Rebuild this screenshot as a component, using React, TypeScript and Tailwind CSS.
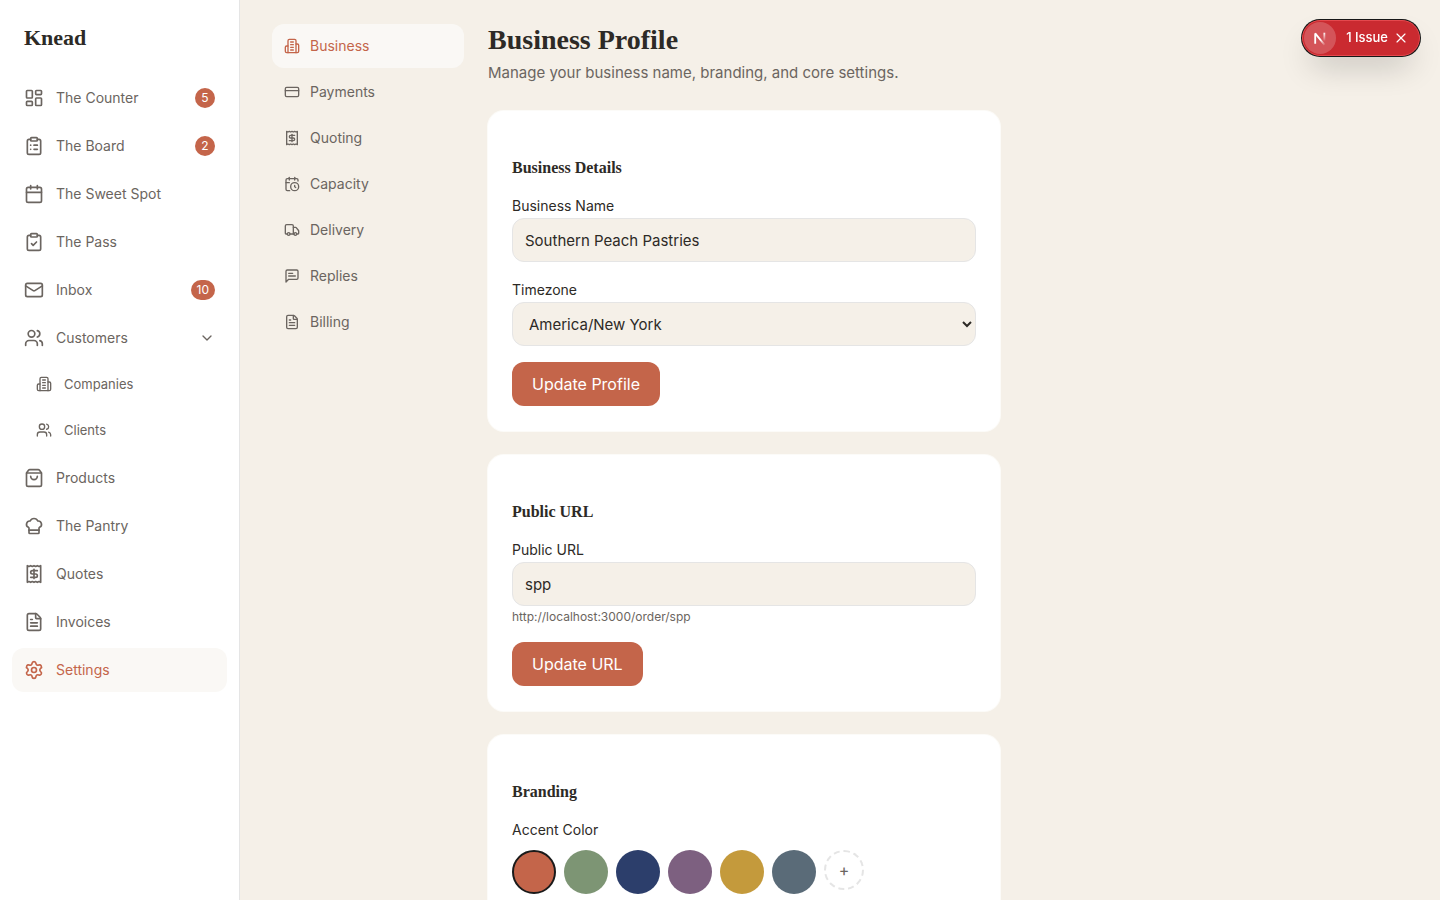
import { useState } from "react";
import type { ComponentType, ReactNode, SVGProps } from "react";
import {
  Calendar,
  CalendarClock,
  ChefHat,
  ChevronDown,
  ClipboardCheck,
  ClipboardList,
  CreditCard,
  FileText,
  LayoutDashboard,
  Mail,
  Receipt,
  Settings,
  ShoppingBag,
  Truck,
  Users,
  X,
} from "lucide-react";

type Icon = ComponentType<SVGProps<SVGSVGElement>>;

type NavItem = {
  label: string;
  icon: Icon;
  badge?: number;
  children?: NavItem[];
};

function StrokeIcon(props: SVGProps<SVGSVGElement>) {
  return (
    <svg
      viewBox="0 0 24 24"
      fill="none"
      stroke="currentColor"
      strokeWidth={2}
      strokeLinecap="round"
      strokeLinejoin="round"
      aria-hidden="true"
      {...props}
    />
  );
}

function Building(props: SVGProps<SVGSVGElement>) {
  return (
    <StrokeIcon {...props}>
      <path d="M6 22V4a2 2 0 0 1 2-2h8a2 2 0 0 1 2 2v18Z" />
      <path d="M6 12H4a2 2 0 0 0-2 2v6a2 2 0 0 0 2 2h2" />
      <path d="M18 9h2a2 2 0 0 1 2 2v9a2 2 0 0 1-2 2h-2" />
      <path d="M10 6h4M10 10h4M10 14h4M10 18h4" />
    </StrokeIcon>
  );
}

function Message(props: SVGProps<SVGSVGElement>) {
  return (
    <StrokeIcon {...props}>
      <path d="M21 15a2 2 0 0 1-2 2H7l-4 4V5a2 2 0 0 1 2-2h14a2 2 0 0 1 2 2z" />
      <path d="M13 8H7" />
      <path d="M17 12H7" />
    </StrokeIcon>
  );
}

const mainNav: NavItem[] = [
  { label: "The Counter", icon: LayoutDashboard, badge: 5 },
  { label: "The Board", icon: ClipboardList, badge: 2 },
  { label: "The Sweet Spot", icon: Calendar },
  { label: "The Pass", icon: ClipboardCheck },
  { label: "Inbox", icon: Mail, badge: 10 },
  {
    label: "Customers",
    icon: Users,
    children: [
      { label: "Companies", icon: Building },
      { label: "Clients", icon: Users },
    ],
  },
  { label: "Products", icon: ShoppingBag },
  { label: "The Pantry", icon: ChefHat },
  { label: "Quotes", icon: Receipt },
  { label: "Invoices", icon: FileText },
  { label: "Settings", icon: Settings },
];

const settingsNav: NavItem[] = [
  { label: "Business", icon: Building },
  { label: "Payments", icon: CreditCard },
  { label: "Quoting", icon: Receipt },
  { label: "Capacity", icon: CalendarClock },
  { label: "Delivery", icon: Truck },
  { label: "Replies", icon: Message },
  { label: "Billing", icon: FileText },
];

const accents = [
  { name: "Terracotta", color: "bg-[#c4654a]" },
  { name: "Sage", color: "bg-[#7d9574]" },
  { name: "Navy", color: "bg-[#2c3e6b]" },
  { name: "Plum", color: "bg-[#7d6080]" },
  { name: "Honey", color: "bg-[#c49a3c]" },
  { name: "Slate", color: "bg-[#5a6b78]" },
];

const serif = "font-['Liberation_Serif',serif] font-bold";
const fieldLabel = "block text-sm leading-6";
const field =
  "h-11 w-full rounded-xl border border-[#e5e5e5] bg-[#f5f0e8] text-[15px] text-[#2d2a26]";

function Sidebar() {
  const [open, setOpen] = useState(true);

  return (
    <aside className="flex w-60 shrink-0 flex-col border-r border-[#e5e5e5] bg-white px-3 py-6">
      <div className={`mb-6 px-3 text-[22px] leading-7 ${serif}`}>Knead</div>
      <nav className="flex flex-col gap-1 text-sm text-[#6b6560]">
        {mainNav.map(({ label, icon: Icon, badge, children }) =>
          children ? (
            <div key={label}>
              <button
                type="button"
                aria-expanded={open}
                onClick={() => setOpen(!open)}
                className="flex h-11 w-full items-center gap-3 rounded-xl px-3"
              >
                <Icon className="size-5" />
                <span className="flex-1 text-left">{label}</span>
                <ChevronDown className="size-4" />
              </button>
              {open && (
                <div className="mt-0.5 flex flex-col gap-0.5 pl-3 text-[13px]">
                  {children.map(({ label: childLabel, icon: ChildIcon }) => (
                    <a key={childLabel} href="#" className="flex h-11 items-center gap-3 rounded-xl px-3">
                      <ChildIcon className="size-4" />
                      {childLabel}
                    </a>
                  ))}
                </div>
              )}
            </div>
          ) : (
            <a
              key={label}
              href="#"
              className={`flex h-11 items-center gap-3 rounded-xl px-3 ${
                label === "Settings" ? "bg-[#faf8f5] text-[#c4654a]" : ""
              }`}
            >
              <Icon className="size-5" />
              <span className="flex-1">{label}</span>
              {badge && (
                <span className="flex h-5 min-w-5 items-center justify-center rounded-full bg-[#c4654a] px-1.5 text-xs text-white">
                  {badge}
                </span>
              )}
            </a>
          )
        )}
      </nav>
    </aside>
  );
}

function SettingsNav() {
  return (
    <nav className="flex w-48 shrink-0 flex-col gap-0.5 text-sm text-[#6b6560]">
      {settingsNav.map(({ label, icon: Icon }) => (
        <a
          key={label}
          href="#"
          className={`flex h-11 items-center gap-2.5 rounded-xl px-3 ${
            label === "Business" ? "bg-[#faf8f5] text-[#c4654a]" : ""
          }`}
        >
          <Icon className="size-4" />
          {label}
        </a>
      ))}
    </nav>
  );
}

function Card({ title, children }: { title: string; children: ReactNode }) {
  return (
    <section className="rounded-2xl bg-white px-6 pt-[45px] pb-[25px] ring-1 ring-[#fcfbf8]">
      <h2 className={`mb-[14px] text-base leading-6 ${serif}`}>{title}</h2>
      <div className="flex flex-col items-start gap-4">{children}</div>
    </section>
  );
}

function SubmitButton({ children }: { children: ReactNode }) {
  return (
    <button type="button" className="h-11 rounded-xl bg-[#c4654a] px-5 text-base text-white">
      {children}
    </button>
  );
}

function IssueBadge() {
  return (
    <div className="fixed top-5 right-5 flex h-9 items-center rounded-full border border-[#e5484d] bg-[#ca2a30] pr-2.5 pl-px font-['Inter',sans-serif] text-[13px] font-medium text-white shadow-[0_16px_32px_-8px_rgba(0,0,0,0.24)] ring-1 ring-[#171717]">
      <button type="button" aria-label="Open dev tools" className="flex size-8 items-center justify-center rounded-full bg-white/20">
        <svg viewBox="0 0 14 14" className="size-4" fill="none" aria-hidden="true">
          <defs>
            <linearGradient id="diag" x1="8" y1="8" x2="12" y2="13" gradientUnits="userSpaceOnUse">
              <stop stopColor="white" />
              <stop offset="1" stopColor="white" stopOpacity="0" />
            </linearGradient>
            <linearGradient id="stem" x1="11" y1="2" x2="11" y2="10" gradientUnits="userSpaceOnUse">
              <stop stopColor="white" />
              <stop offset="1" stopColor="white" stopOpacity="0" />
            </linearGradient>
          </defs>
          <path d="M2.8 12V3L11 13" stroke="url(#diag)" strokeWidth="1.6" strokeLinejoin="bevel" />
          <path d="M10.8 2.4v7" stroke="url(#stem)" strokeWidth="1.6" />
        </svg>
      </button>
      <button type="button" className="ml-2.5">1 Issue</button>
      <button type="button" aria-label="Dismiss" className="ml-[5px]">
        <X className="size-4" strokeWidth={1.75} />
      </button>
    </div>
  );
}

export default function App() {
  const [name, setName] = useState("Southern Peach Pastries");
  const [slug, setSlug] = useState("spp");
  const [accent, setAccent] = useState("Terracotta");

  return (
    <div className="flex h-screen overflow-hidden bg-[#f5f0e8] font-['Inter',sans-serif] text-[#2d2a26]">
      <Sidebar />

      <main className="flex flex-1 gap-6 overflow-y-auto px-8 py-6 [scrollbar-width:none]">
        <SettingsNav />

        <div className="max-w-lg flex-1">
          <h1 className={`text-[28px] leading-8 ${serif}`}>Business Profile</h1>
          <p className="mt-1 mb-[25px] text-[15px] leading-[26px] text-[#6b6560]">
            Manage your business name, branding, and core settings.
          </p>

          <div className="flex flex-col gap-6 pb-6">
            <Card title="Business Details">
              <div className="w-full">
                <label htmlFor="name" className={fieldLabel}>Business Name</label>
                <input id="name" value={name} onChange={(e) => setName(e.target.value)} className={`px-3 ${field}`} />
              </div>
              <div className="w-full">
                <label htmlFor="timezone" className={fieldLabel}>Timezone</label>
                <select id="timezone" className={`pl-3 ${field}`}>
                  <option>America/New York</option>
                  <option>America/Chicago</option>
                  <option>America/Denver</option>
                  <option>America/Los Angeles</option>
                </select>
              </div>
              <SubmitButton>Update Profile</SubmitButton>
            </Card>

            <Card title="Public URL">
              <div className="w-full">
                <label htmlFor="slug" className={fieldLabel}>Public URL</label>
                <input id="slug" value={slug} onChange={(e) => setSlug(e.target.value)} className={`px-3 ${field}`} />
                <p className="pt-0.5 text-xs leading-[18px] text-[#6b6560]">http://localhost:3000/order/{slug}</p>
              </div>
              <SubmitButton>Update URL</SubmitButton>
            </Card>

            <Card title="Branding">
              <fieldset>
                <legend className={fieldLabel}>Accent Color</legend>
                <div className="mt-2 flex items-start gap-2">
                  {accents.map(({ name: accentName, color }) => (
                    <button
                      key={accentName}
                      type="button"
                      aria-label={accentName}
                      aria-pressed={accent === accentName}
                      onClick={() => setAccent(accentName)}
                      className={`size-11 rounded-full ${color} ${
                        accent === accentName ? "border-2 border-[#1a1a1a]" : ""
                      }`}
                    />
                  ))}
                  <button
                    type="button"
                    aria-label="Custom color"
                    className="size-10 rounded-full border-2 border-dashed border-[#e5e5e5] text-base leading-none text-[#6b6560]"
                  >
                    +
                  </button>
                </div>
              </fieldset>
            </Card>
          </div>
        </div>
      </main>

      <IssueBadge />
    </div>
  );
}
